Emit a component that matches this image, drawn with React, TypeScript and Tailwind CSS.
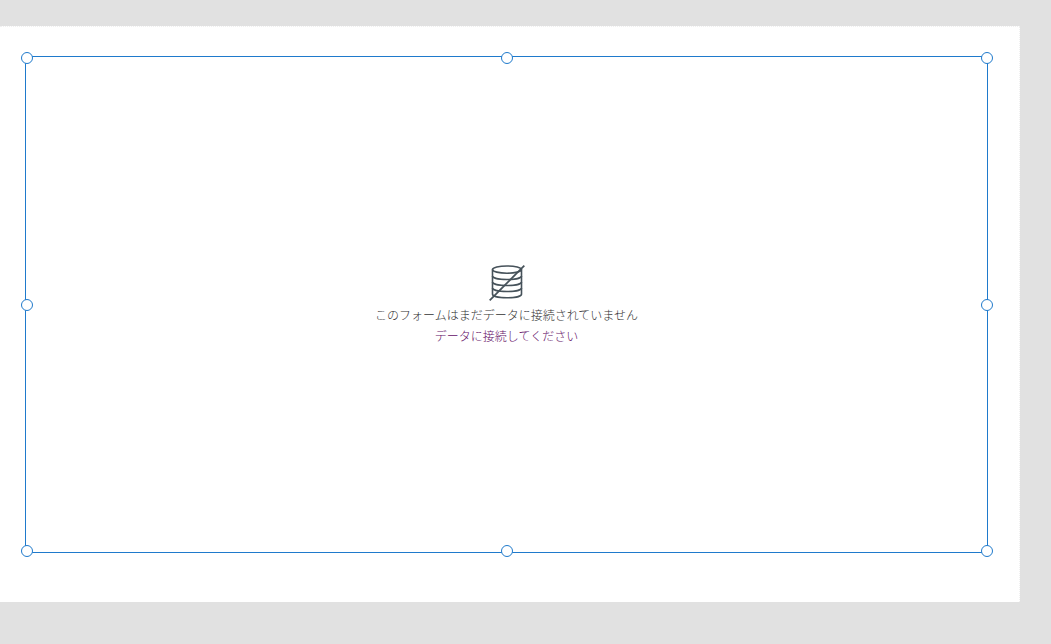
const handles = [
  { id: 'nw', place: 'left-[-5px] top-[-5px]' },
  { id: 'n', place: 'left-1/2 top-[-5px] -translate-x-1/2' },
  { id: 'ne', place: 'right-[-6px] top-[-5px]' },
  { id: 'w', place: 'left-[-5px] top-1/2 -translate-y-1/2' },
  { id: 'e', place: 'right-[-6px] top-1/2 -translate-y-1/2' },
  { id: 'sw', place: 'left-[-5px] bottom-[-5px]' },
  { id: 's', place: 'left-1/2 bottom-[-5px] -translate-x-1/2' },
  { id: 'se', place: 'right-[-6px] bottom-[-5px]' },
];

function NoDataIcon() {
  return (
    <svg viewBox="0 0 36 36" className="size-9 fill-none stroke-[#46525a] stroke-[1.6]" aria-hidden="true">
      <ellipse cx="18" cy="4.6" rx="14.5" ry="3.6" />
      <path d="M3.5 4.6v24.6c0 2 6.5 3.5 14.5 3.5s14.5-1.5 14.5-3.5V4.6" />
      <path d="M3.5 11c0 2 6.5 3.5 14.5 3.5s14.5-1.5 14.5-3.5" />
      <path d="M3.5 17c0 2 6.5 3.5 14.5 3.5s14.5-1.5 14.5-3.5" />
      <path d="M3.5 23c0 2 6.5 3.5 14.5 3.5s14.5-1.5 14.5-3.5" />
      <path className="stroke-[1.8]" d="M.7 35.3 35.3.7" />
    </svg>
  );
}

function EmptyForm() {
  return (
    <section className="relative flex flex-1 flex-col items-center justify-center border border-[#1f7acc] pt-0.5 text-xs">
      <NoDataIcon />
      <p className="mt-[3px] leading-[21px] text-[#333333]">このフォームはまだデータに接続されていません</p>
      <a href="#data" className="leading-[21px] text-[#640f68]">
        データに接続してください
      </a>

      {handles.map((handle) => (
        <span
          key={handle.id}
          className={`absolute size-3 rounded-full border border-[#1f7acc] bg-white ${handle.place}`}
        />
      ))}
    </section>
  );
}

export default function App() {
  return (
    <div
      lang="ja"
      className="flex min-h-screen flex-col bg-[#e1e1e1] pt-[26px] pr-[31px] pb-[42px] font-['Noto_Sans_CJK_JP',sans-serif] font-light"
    >
      <main className="flex flex-1 flex-col border-t border-r border-dotted border-[#f0f0f0] bg-white pt-[29px] pr-[31px] pb-[49px] pl-[25px]">
        <EmptyForm />
      </main>
    </div>
  );
}
